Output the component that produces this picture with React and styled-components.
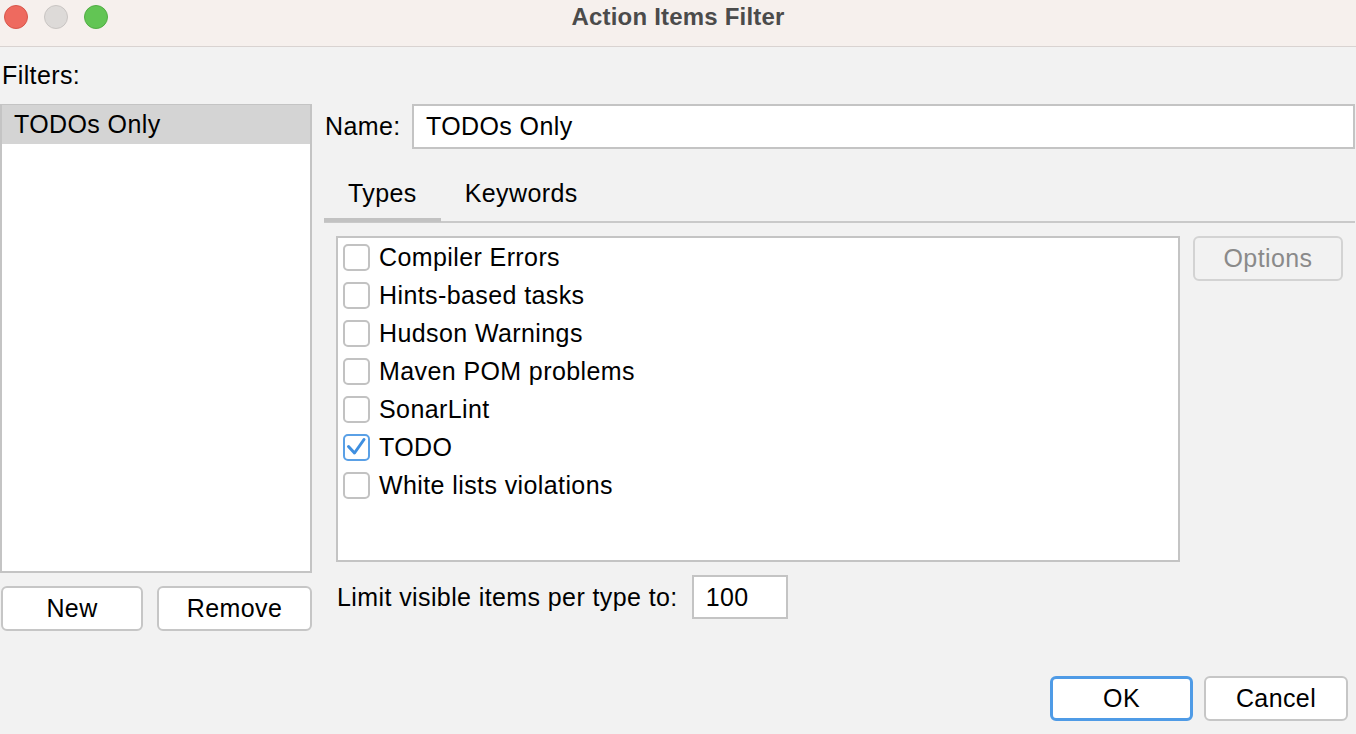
import React from "react";
import styled, { createGlobalStyle } from "styled-components";

const GlobalStyle = createGlobalStyle`
  html, body { margin: 0; padding: 0; background: #f2f2f2; }
  body { font-family: "Liberation Sans", Arial, Helvetica, sans-serif; color: #000; letter-spacing: 0.4px; }
  * { box-sizing: border-box; }
`;

const Window = styled.div`
  width: 1356px;
  height: 734px;
  display: flex;
  flex-direction: column;
  background: #f2f2f2;
  overflow: hidden;
`;

const TitleBar = styled.div`
  height: 47px;
  flex: none;
  display: grid;
  grid-template-columns: 1fr auto 1fr;
  align-items: start;
  padding-top: 5px;
  background: #f6f0ed;
  border-bottom: 1px solid #d9d3d1;
`;

const Lights = styled.div`
  display: flex;
  gap: 16px;
  padding-left: 4px;
`;

const Light = styled.span`
  width: 24px;
  height: 24px;
  border-radius: 50%;
  background: ${(p) => p.$bg};
  border: 1px solid ${(p) => p.$bd};
`;

const Title = styled.div`
  font-size: 24px;
  line-height: 24px;
  font-weight: 700;
  letter-spacing: 0.2px;
  color: #4b4b4b;
`;

const Content = styled.div`
  flex: 1;
  display: flex;
  flex-direction: column;
  padding: 0 1px 0 0;
`;

const FiltersLabel = styled.div`
  height: 57px;
  display: flex;
  align-items: center;
  padding-left: 2px;
  font-size: 25px;
`;

const Main = styled.div`
  display: flex;
  gap: 12px;
`;

const LeftColumn = styled.div`
  width: 312px;
  flex: none;
  display: flex;
  flex-direction: column;
`;

const List = styled.div`
  height: 469px;
  background: #fff;
  border: 2px solid #c4c4c4;
  border-top-width: 1px;
`;

const ListItem = styled.div`
  height: 39px;
  display: flex;
  align-items: center;
  padding-left: 12px;
  font-size: 25px;
  background: ${(p) => (p.$selected ? "#d4d4d4" : "transparent")};
`;

const ButtonRow = styled.div`
  display: flex;
  gap: 14px;
  margin-top: 13px;
  padding-left: 1px;
`;

const Button = styled.button`
  height: 45px;
  width: ${(p) => (p.$width ? `${p.$width}px` : "auto")};
  flex: ${(p) => (p.$grow ? 1 : "none")};
  background: ${(p) => (p.$disabled ? "#f2f2f2" : "#fff")};
  color: ${(p) => (p.$disabled ? "#8a8a8a" : "#000")};
  border: ${(p) => (p.$default ? "3px solid #4f9be6" : `2px solid ${p.$disabled ? "#d3d3d3" : "#c6c6c6"}`)};
  border-radius: 6px;
  font-family: inherit;
  letter-spacing: inherit;
  font-size: 25px;
  padding: 0;
  display: flex;
  align-items: center;
  justify-content: center;
`;

const RightColumn = styled.div`
  flex: 1;
  display: flex;
  flex-direction: column;
`;

const NameRow = styled.div`
  display: flex;
  align-items: center;
  height: 45px;
`;

const NameLabel = styled.label`
  width: 88px;
  flex: none;
  padding-left: 1px;
  font-size: 25px;
`;

const TextField = styled.div`
  height: ${(p) => p.$h || 45}px;
  width: ${(p) => (p.$w ? `${p.$w}px` : "auto")};
  flex: ${(p) => (p.$w ? "none" : 1)};
  background: #fff;
  border: 2px solid #c4c4c4;
  display: flex;
  align-items: center;
  padding-left: 12px;
  font-size: 25px;
`;

const TabBar = styled.div`
  display: flex;
  border-bottom: 2px solid #c9c9c9;
`;

const Tab = styled.div`
  padding: 30px 24px 11px;
  line-height: 28px;
  font-size: 25px;
  margin-bottom: -1px;
  border-bottom: 4px solid ${(p) => (p.$active ? "#c2c2c2" : "transparent")};
`;

const TypesBody = styled.div`
  display: flex;
  align-items: flex-start;
  gap: 13px;
  margin-top: 13px;
  padding-left: 12px;
`;

const CheckPanel = styled.div`
  width: 844px;
  height: 326px;
  background: #fff;
  border: 2px solid #c4c4c4;
  padding: 0 0 0 5px;
  display: flex;
  flex-direction: column;
`;

const CheckRow = styled.div`
  height: 38px;
  display: flex;
  align-items: center;
  gap: 9px;
  font-size: 25px;
`;

const Box = styled.span`
  width: 27px;
  height: 27px;
  flex: none;
  border-radius: 5px;
  border: 2px solid ${(p) => (p.$checked ? "#5aa0e6" : "#c2c2c2")};
  background: #fff;
  display: flex;
  align-items: center;
  justify-content: center;
`;

const LimitRow = styled.div`
  display: flex;
  align-items: center;
  gap: 14px;
  margin-top: 13px;
  padding-left: 13px;
  font-size: 25px;
`;

const Footer = styled.div`
  margin-top: auto;
  display: flex;
  justify-content: flex-end;
  gap: 11px;
  padding: 0 7px 13px 0;
`;

const items = [
  ["Compiler Errors", false],
  ["Hints-based tasks", false],
  ["Hudson Warnings", false],
  ["Maven POM problems", false],
  ["SonarLint", false],
  ["TODO", true],
  ["White lists violations", false],
];

function Checkbox({ checked }) {
  return (
    <Box $checked={checked}>
      {checked && (
        <svg width="23" height="23" viewBox="0 0 23 23">
          <path d="M3.5 10.5 L9.5 17 L19 3.5" fill="none" stroke="#3f8fe0" strokeWidth="3" strokeLinecap="round" strokeLinejoin="round" />
        </svg>
      )}
    </Box>
  );
}

export default function App() {
  return (
    <Window>
      <GlobalStyle />
      <TitleBar>
        <Lights>
          <Light $bg="#ee6a5f" $bd="#d8564b" />
          <Light $bg="#dddad8" $bd="#c9c5c3" />
          <Light $bg="#62c554" $bd="#51ad44" />
        </Lights>
        <Title>Action Items Filter</Title>
        <div />
      </TitleBar>
      <Content>
        <FiltersLabel>Filters:</FiltersLabel>
        <Main>
          <LeftColumn>
            <List>
              <ListItem $selected>TODOs Only</ListItem>
            </List>
            <ButtonRow>
              <Button $width={142}>New</Button>
              <Button $grow>Remove</Button>
            </ButtonRow>
          </LeftColumn>
          <RightColumn>
            <NameRow>
              <NameLabel>Name:</NameLabel>
              <TextField>TODOs Only</TextField>
            </NameRow>
            <TabBar>
              <Tab $active>Types</Tab>
              <Tab>Keywords</Tab>
            </TabBar>
            <TypesBody>
              <CheckPanel>
                {items.map(([label, checked]) => (
                  <CheckRow key={label}>
                    <Checkbox checked={checked} />
                    <span>{label}</span>
                  </CheckRow>
                ))}
              </CheckPanel>
              <Button $width={150} $disabled>Options</Button>
            </TypesBody>
            <LimitRow>
              <span>Limit visible items per type to:</span>
              <TextField $w={96} $h={44}>100</TextField>
            </LimitRow>
          </RightColumn>
        </Main>
        <Footer>
          <Button $width={143} $default>OK</Button>
          <Button $width={144}>Cancel</Button>
        </Footer>
      </Content>
    </Window>
  );
}
